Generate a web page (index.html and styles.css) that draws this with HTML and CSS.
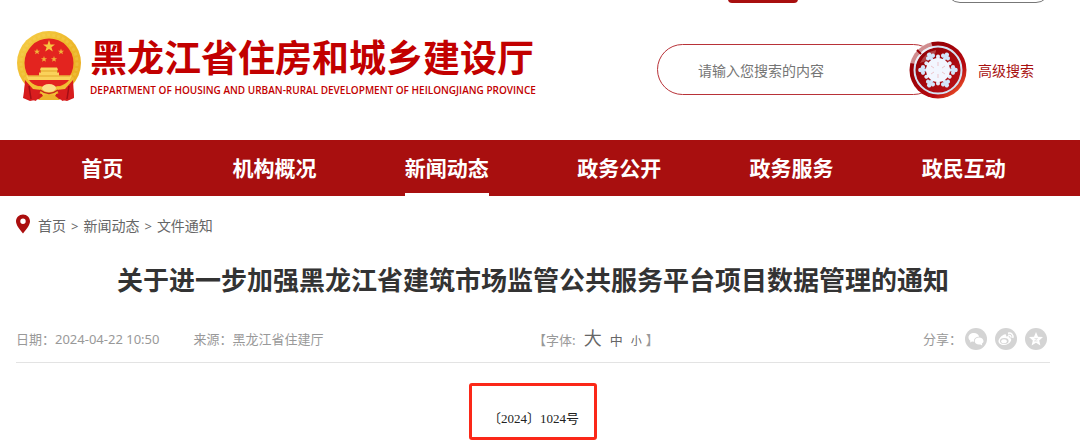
FILE: index.html
```html
<!DOCTYPE html>
<html lang="zh-CN">
<head>
<meta charset="utf-8">
<title>黑龙江省住房和城乡建设厅</title>
<link rel="stylesheet" href="styles.css">
</head>
<body>
<div class="topbar wrap"><span class="top-tab"></span><span class="top-pill"></span></div>
<header class="header wrap">
  <a class="brand" href="#">
    <svg class="emblem" viewBox="0 0 66 72" aria-hidden="true">
      <defs>
        <linearGradient id="gold" x1="0" y1="0" x2="1" y2="1"><stop offset="0" stop-color="#f6cf4a"/><stop offset=".5" stop-color="#eeb92b"/><stop offset="1" stop-color="#e9a91f"/></linearGradient>
      </defs>
      <path d="M10 48 C12 54 22 58 33 58 C44 58 54 54 56 48 L58 68 L51 71 L33 67 L14 71 L7 68Z" fill="#d21a1c"/>
      <circle cx="33" cy="33" r="32" fill="url(#gold)"/>
      <circle cx="33" cy="33" r="28" fill="none" stroke="#f8dc6a" stroke-width="3" stroke-dasharray="3 2" opacity=".25"/>
      <circle cx="33" cy="33" r="24.500" fill="#e3241f"/>
      <path d="M33 10 L34.500 14.500 H39 L35.400 17.300 L36.800 21.500 L33 18.900 L29.200 21.500 L30.600 17.300 L27 14.500 H31.500Z" fill="#f7c640"/>
      <path fill="#f0b43a" d="M21 18.500l.8 2.200h2.300l-1.800 1.400.6 2.200-1.900-1.300-1.900 1.300.6-2.200-1.800-1.400h2.300zM45 18.500l.8 2.200h2.300l-1.800 1.400.6 2.200-1.900-1.300-1.900 1.300.6-2.200-1.800-1.400h2.300zM28 26l.8 2.200h2.300l-1.800 1.400.6 2.200-1.900-1.300-1.900 1.300.6-2.200-1.800-1.400h2.300zM38 26l.8 2.200h2.300l-1.800 1.400.6 2.200-1.900-1.300-1.900 1.300.6-2.200-1.800-1.400h2.300z"/>
      <path d="M25 37.500h16l1 2-1 1v2h2v3h13l-2 4.500H12l-2-4.500h13v-3h2v-2l-1-1z" fill="#fad25a"/>
      <path d="M24 41h18M12 46h42" stroke="#e2a52b" stroke-width="1"/>
      <path d="M13 50h40c-2 3-6 5-9 6H22c-4-1-7-3-9-6z" fill="#e3241f"/>
      <path d="M9 48 C14 51 18 57 25 57 L41 57 C48 57 52 51 57 48 L55 57 C50 61 45 60 43 59 L39 66 H27 L23 59 C20 61 15 60 11 57Z" fill="#f2bf36"/>
      <path d="M9 50 L17 59 L25 60 L20 71 L8 67Z M57 50 L49 59 L41 60 L46 71 L58 67Z" fill="#d81d1e"/>
      <path d="M13 56 L15 69 M53 56 L51 69" stroke="#a30e16" stroke-width="1.500"/>
      <ellipse cx="33" cy="58" rx="7" ry="4" fill="#fbe08a"/>
      <path d="M22 70 Q33 58 44 70Z" fill="#edb32c"/>
      <path d="M24 60 Q33 67 42 60" fill="none" stroke="#c4291c" stroke-width="1.500"/>
    </svg>
    <span class="brand-text">
      <span class="brand-cn">黑龙江省住房和城乡建设厅</span>
      <span class="brand-en">DEPARTMENT OF HOUSING AND URBAN-RURAL DEVELOPMENT OF HEILONGJIANG PROVINCE</span>
    </span>
  </a>
  <form class="search">
    <input class="search-input" type="text" placeholder="请输入您搜索的内容" aria-label="请输入您搜索的内容">
    <button class="search-btn" type="button" aria-label="搜索">
      <svg viewBox="0 0 58 58" aria-hidden="true">
        <defs>
          <linearGradient id="rim" x1="0" y1="0" x2="1" y2="1"><stop offset=".3" stop-color="#980006"/><stop offset=".7" stop-color="#b80a10"/><stop offset=".9" stop-color="#f0582c"/></linearGradient>
          <linearGradient id="disc" x1="0" y1="0" x2="1" y2="1"><stop offset="0" stop-color="#8d0004"/><stop offset="1" stop-color="#bd1119"/></linearGradient>
          <g id="arm">
            <path d="M29 20V13" stroke-width="3"/>
            <circle cx="29" cy="11.500" r="2.300"/><circle cx="26.200" cy="14" r="2.100"/><circle cx="31.800" cy="14" r="2.100"/>
          </g>
          <g id="bud">
            <path d="M29 20V16" stroke-width="3"/><circle cx="29" cy="15.500" r="2"/>
          </g>
        </defs>
        <circle cx="29" cy="29" r="28.500" fill="url(#rim)"/>
        <circle cx="29" cy="29" r="23.500" fill="url(#disc)" stroke="#d4e3f4" stroke-width="2"/>
        <path d="M1 22 A29 29 0 0 1 22 1 L24 7 A23 23 0 0 0 7 23Z" fill="#fff" opacity=".55"/>
        <path d="M11 22 Q16 11 27 9 Q27 17 11 22Z" fill="#fff" opacity=".25"/>
        <path d="M8 9L12 13" stroke="#980006" stroke-width="2"/>
        <g fill="#d3e6fb" stroke="#d3e6fb" stroke-width="0">
          <use href="#arm" transform="rotate(30 29 29)"/><use href="#arm" transform="rotate(90 29 29)"/><use href="#arm" transform="rotate(150 29 29)"/><use href="#arm" transform="rotate(210 29 29)"/><use href="#arm" transform="rotate(270 29 29)"/><use href="#arm" transform="rotate(330 29 29)"/>
        </g>
        <g fill="#e4eefc" stroke="#e4eefc" stroke-width="0">
          <use href="#bud"/><use href="#bud" transform="rotate(60 29 29)"/><use href="#bud" transform="rotate(120 29 29)"/><use href="#bud" transform="rotate(180 29 29)"/><use href="#bud" transform="rotate(240 29 29)"/><use href="#bud" transform="rotate(300 29 29)"/>
        </g>
        <circle cx="29" cy="29" r="12" fill="#f2f6ff"/>
        <path d="M29 21V25M29 33V37M22 25L25 27M36 25L33 27M22 33L25 31M36 33L33 31" stroke="#ecc5cc"/>
      </svg>
    </button>
    <a class="advanced" href="#">高级搜索</a>
  </form>
</header>
<nav class="nav">
  <div class="nav-list wrap">
    <a href="#">首页</a><a href="#">机构概况</a><a class="active" href="#">新闻动态</a><a href="#">政务公开</a><a href="#">政务服务</a><a href="#">政民互动</a>
  </div>
</nav>
<main class="wrap">
  <div class="crumbs">
    <svg class="pin" viewBox="0 0 14 20" aria-hidden="true"><path fill-rule="evenodd" d="M7 0.500C3 .5 0 3.500 0 7.300C0 11.500 4 15.500 7 19.500C10 15.500 14 11.500 14 7.300C14 3.500 11 .5 7 .5ZM7 4.500a2.700 2.700 0 1 1 0 5.400a2.700 2.700 0 0 1 0-5.400Z" fill="#ab0e0e"/></svg>
    <a href="#">首页</a><span>&gt;</span><a href="#">新闻动态</a><span>&gt;</span><a href="#">文件通知</a>
  </div>
  <h1 class="title">关于进一步加强黑龙江省建筑市场监管公共服务平台项目数据管理的通知</h1>
  <div class="meta">
    <div class="source"><span>日期：2024-04-22 10:50</span><span>来源：黑龙江省住建厅</span></div>
    <div class="sizes"><span>【字体:</span><button class="big" type="button">大</button><button class="mid" type="button">中</button><button class="small" type="button">小</button><span>】</span></div>
    <div class="share"><span>分享：</span>
      <a href="#" aria-label="微信"><svg viewBox="0 0 22 22"><circle cx="11" cy="11" r="11"/><path class="w" d="M9 5C5.700 5 3.500 7 3.500 9.400C3.500 10.800 4.200 11.900 5.400 12.700L5 14.500L7 13.500L9 13.700C8.700 10.500 11 8.700 14.200 8.700C13.700 6.500 11.500 5 9 5ZM14 9.500C11.500 9.500 9.700 11.100 9.700 13.100C9.700 15.100 11.500 16.600 14 16.600L15.300 16.400L17.300 17.500L16.900 15.700C18 15 18.500 14.200 18.500 13.100C18.500 11.100 16.500 9.500 14 9.500Z"/></svg></a>
      <a href="#" aria-label="微博"><svg viewBox="0 0 22 22"><circle cx="11" cy="11" r="11"/><path class="w" d="M9.500 6.500C11 6 11.500 7 11 8.600C13 7.800 15 8 14.500 10C16 10.300 16.600 11.300 16 12.800C15 15.500 12 17 9 17C5.500 17 3.300 15.300 3.500 13C3.700 10.500 7 7 9.500 6.500Z"/><ellipse cx="9.300" cy="13" rx="4.300" ry="3"/><ellipse class="w" cx="9" cy="13.200" rx="2.800" ry="2"/><path d="M13 5.200C16.500 4.500 18.700 7 17.800 10M13.200 7.200C15 7 16.200 8 15.900 9.700" fill="none" stroke="#fff" stroke-width="1.500"/></svg></a>
      <a href="#" aria-label="收藏"><svg viewBox="0 0 22 22"><circle cx="11" cy="11" r="11"/><path class="w" d="M11 4L13 8.700L18 9.100L14.200 12.400L15.400 17.500L11 14.800L6.600 17.500L7.800 12.400L4 9.100L9 8.700Z"/><path d="M9.500 10.500h3l-3 2.500h3" fill="none" stroke="#d4d4d4" stroke-width=".6"/></svg></a>
    </div>
  </div>
  <p class="doc-number">〔2024〕1024号</p>
</main>
</body>
</html>
```
FILE: styles.css
```css
* { box-sizing: border-box; }
body {
  margin: 0;
  background: #fff;
  color: #666;
  font: 14px/20px "Noto Sans CJK SC", sans-serif;
}
a { color: inherit; text-decoration: none; }
button { border: 0; padding: 0; background: none; color: inherit; font: inherit; cursor: pointer; }
svg { display: block; }
.wrap { margin: 0 30px 0 16px; }

.topbar { display: flex; justify-content: flex-end; align-items: flex-end; gap: 148px; height: 3px; overflow: hidden; }
.top-tab { width: 70px; height: 24px; border-radius: 4px; background: #a80f0f; }
.top-pill { width: 104px; height: 28px; border: 1px solid #777; border-radius: 14px; }

.header { display: flex; justify-content: space-between; align-items: center; height: 137px; padding-bottom: 4px; }
.brand { display: flex; align-items: center; gap: 8px; margin-bottom: 8px; color: #c20000; }
.emblem { width: 66px; height: 72px; }
.brand-text { display: flex; flex-direction: column; gap: 5px; white-space: nowrap; }
.brand-cn { font-size: 37px; line-height: 44px; font-weight: 700; }
.brand-en { font: 600 10px/14px "Open Sans", sans-serif; }

.search { display: flex; align-items: center; padding-right: 16px; }
.search-input {
  width: 282px; height: 51px; padding: 0 40px;
  border: 1px solid #b83238; border-radius: 26px;
  background: #fff; color: #666; font: inherit; outline: 0;
}
.search-input::placeholder { color: #757575; opacity: 1; }
.search-btn { width: 58px; height: 58px; margin-left: -30px; position: relative; }
.advanced { margin-left: 11px; color: #a80f0f; }

.nav { background: #a80f0f; }
.nav-list { display: grid; grid-template-columns: repeat(6, 1fr); justify-items: center; }
.nav-list a { height: 56px; color: #fff; font-size: 21px; line-height: 54px; font-weight: 700; }
.nav-list .active { border-bottom: 3px solid #fff; }

.crumbs { display: flex; align-items: center; gap: 5px; padding-top: 16px; }
.pin { width: 14px; height: 20px; margin-right: 3px; }
.crumbs a { padding-top: 2px; }
.crumbs span { padding-top: 4px; font: 13px/20px "Noto Sans", sans-serif; }
.title { margin: 22px 0 0; color: #333; font-size: 26px; line-height: 42px; font-weight: 700; text-align: center; }

.meta {
  display: grid; grid-template-columns: 2fr 1fr 1fr; align-items: center;
  height: 48px; margin-top: 15px; border-bottom: 1px solid #e3e3e3;
  color: #999; font-size: 13px;
}
.source { display: flex; gap: 34px; font-family: "Noto Sans", "Noto Sans CJK SC", sans-serif; }
.sizes { display: flex; align-items: baseline; }
.sizes button { color: #666; }
.sizes .big { margin: 0 8px; font-size: 18px; }
.sizes .mid { margin-right: 8px; font-size: 13px; }
.sizes .small { margin-right: 4px; font-size: 11px; }
.share { display: flex; justify-content: flex-end; align-items: center; gap: 8px; padding-right: 3px; }
.share span { margin-right: -5px; }
.share svg { width: 22px; height: 22px; fill: #d4d4d4; }
.share .w { fill: #fff; }

.doc-number {
  width: max-content; margin: 20px auto 0; padding: 23px 15px 8px 16px;
  border: 3px solid #fb2818; border-radius: 3px;
  color: #222; font: 13px/20px "Liberation Serif", "Noto Sans CJK SC", serif;
}
```
